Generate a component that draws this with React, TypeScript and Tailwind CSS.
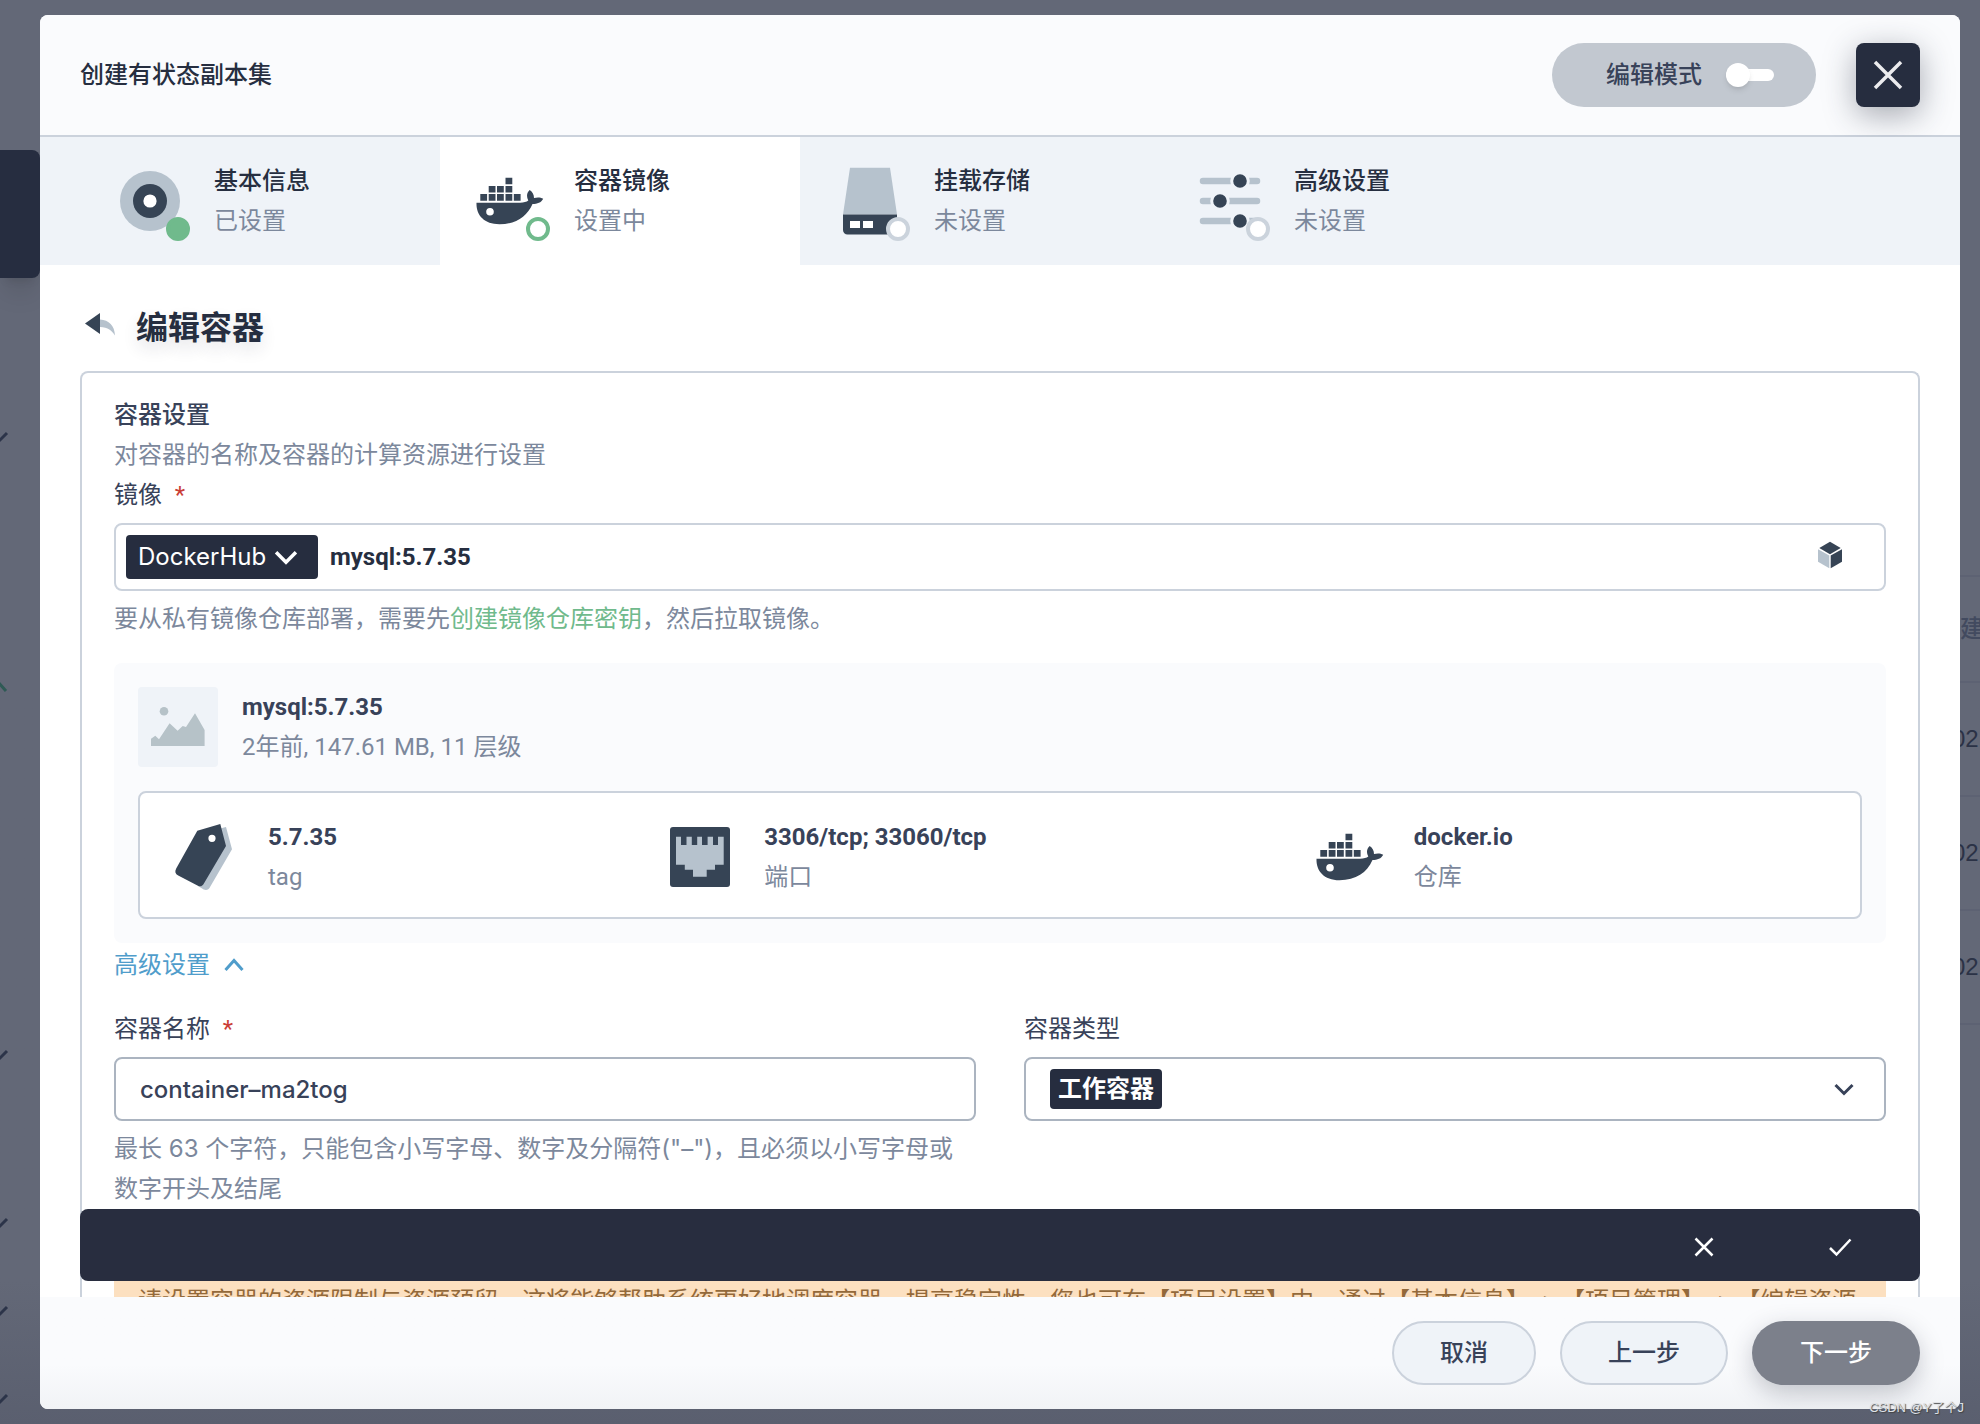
import { ReactNode, useState } from "react";
import clsx from "clsx";

type StepStatus = "done" | "active" | "todo";

interface Step {
  title: string;
  desc: string;
  status: StepStatus;
  icon: ReactNode;
}

function DockerIcon() {
  return (
    <svg viewBox="0 0 80 80" className="size-20 shrink-0" fill="#364455">
      <path d="M10.3 33h6.8v6.7h-6.8zM18.7 33h6.8v6.7h-6.8zM27 33h6.8v6.7H27zM35.5 33h6.8v6.7h-6.8zM43.8 33h6.8v6.7h-6.8zM18.7 25h6.8v6.5h-6.8zM27 25h6.8v6.5H27zM35.5 25h6.8v6.5h-6.8zM35.5 16.7h6.8v6.5h-6.8z" />
      <path
        fillRule="evenodd"
        d="M6.5 41.7H50c4 0 6.500-.8 8.300-2.200C56 35 57 31.500 59.700 29c2.800 2 4.300 4.500 4.300 8 3.500-1 6.500-.8 9.200.8-2 4-5.800 5.200-10.700 5.200C57 55.500 46 63.200 29.500 63.200 14 63.200 6 54 6.500 41.700zM20 47a3.800 3.800 0 1 0 0 7.600 3.800 3.800 0 0 0 0-7.600z"
      />
    </svg>
  );
}

function DiscIcon() {
  return (
    <svg viewBox="0 0 80 80" className="size-20 shrink-0">
      <circle cx="40" cy="40" r="30" fill="#b6c2cd" />
      <circle cx="40" cy="40" r="17" fill="#364455" />
      <circle cx="40" cy="40" r="6.6" fill="#fff" />
    </svg>
  );
}

function StorageIcon() {
  return (
    <svg viewBox="0 0 80 80" className="size-20 shrink-0">
      <path d="M20 6.700h40l7 46.800H13z" fill="#b6c2cd" />
      <path d="M13 53.500h54V69a4.500 4.500 0 0 1-4.500 4.500h-45A4.500 4.500 0 0 1 13 69z" fill="#364455" />
      <path d="M20 60h10v7H20zM33 60h10v7H33z" fill="#fff" />
    </svg>
  );
}

function SlidersIcon() {
  return (
    <svg viewBox="0 0 80 80" className="size-20 shrink-0">
      <g stroke="#b6c2cd" strokeWidth="6.500" strokeLinecap="round">
        <path d="M13 20h54M13 40h54M13 60h54" />
      </g>
      <g fill="#364455" stroke="#eff3f8" strokeWidth="3">
        <circle cx="50" cy="20" r="8.300" />
        <circle cx="30" cy="40" r="8.300" />
        <circle cx="50" cy="60" r="8.300" />
      </g>
    </svg>
  );
}

function TagIcon() {
  return (
    <svg viewBox="0 0 80 80" className="size-20 shrink-0">
      <path d="M56 11.500l6-1.500 6 22.300-21.800 37.400c-1.500 3-3.700 4-6.500 2.800L34 69z" fill="#b6c2cd" />
      <path
        fillRule="evenodd"
        d="M33.300 13.700L56.300 7 62 29 39.900 66.500c-1.500 2.800-3.600 3.500-6 2.200L14.200 58.500c-3-1.600-3.700-4-2-7zM48 17.700a3.600 3.600 0 1 0 0 7.200 3.600 3.600 0 0 0 0-7.200z"
        fill="#364455"
      />
    </svg>
  );
}

function PortIcon() {
  return (
    <svg viewBox="0 0 80 80" className="size-20 shrink-0">
      <rect x="10" y="10" width="60" height="60" rx="3" fill="#364455" />
      <path
        d="M16 19.700h5V28h5.500v-8.300h5.300V28h5.400v-8.300h4.800V28h5.600v-8.300h5.400V28h5v-8.300h5.700v28H55v5h-8.300v7H33v-7h-8.200v-5H16z"
        fill="#b6c2cd"
      />
    </svg>
  );
}

function Chevron({ up, className }: { up?: boolean; className?: string }) {
  return (
    <svg
      viewBox="0 0 24 24"
      className={clsx("shrink-0 pointer-events-none", className)}
      fill="none"
      stroke="currentColor"
    >
      <path d={up ? "M3.500 17L12 7.500l8.500 9.500" : "M3.500 8l8.500 8.500L20.500 8"} />
    </svg>
  );
}

function Required() {
  return (
    <span className="ml-1.5 font-[Roboto,sans-serif] text-[#ca3d35]">*</span>
  );
}

const steps: Step[] = [
  { title: "基本信息", desc: "已设置", status: "done", icon: <DiscIcon /> },
  { title: "容器镜像", desc: "设置中", status: "active", icon: <DockerIcon /> },
  { title: "挂载存储", desc: "未设置", status: "todo", icon: <StorageIcon /> },
  { title: "高级设置", desc: "未设置", status: "todo", icon: <SlidersIcon /> },
];

const imageInfo = [
  { value: "5.7.35", label: "tag", icon: <TagIcon /> },
  { value: "3306/tcp; 33060/tcp", label: "端口", icon: <PortIcon /> },
  { value: "docker.io", label: "仓库", icon: <DockerIcon /> },
];

function StepItem({ step }: { step: Step }) {
  return (
    <li
      className={clsx(
        "flex w-[360px] gap-6 py-6 pl-[30px]",
        step.status === "active" && "bg-white"
      )}
    >
      <div className="relative">
        {step.icon}
        <span
          className={clsx(
            "absolute right-0 bottom-0 size-6 rounded-full border-4",
            step.status === "done" && "border-[#70ba8c] bg-[#70ba8c]",
            step.status === "active" && "border-[#70ba8c] bg-white",
            step.status === "todo" && "border-[#cbd3dc] bg-white"
          )}
        />
      </div>
      <div>
        <p className="font-medium text-[#262e40]">{step.title}</p>
        <p className="text-[#7c889c]">{step.desc}</p>
      </div>
    </li>
  );
}

// dimmed page that stays visible around the dialog
function PageBehind() {
  return (
    <div
      aria-hidden="true"
      className="absolute inset-0 flex justify-between overflow-hidden bg-linear-to-b from-[#636877] from-90% to-[#5a5f6f]"
    >
      <div className="relative w-10">
        <div className="mt-[150px] h-32 w-10 rounded-r-lg bg-[#262d40] shadow-xl" />
        <svg
          className="absolute top-0 left-0 h-full w-10"
          fill="none"
          stroke="#2c3449"
          strokeWidth="3"
        >
          <path d="M-6 434l4 8 9-9M-6 1052l4 8 9-9M-6 1220l4 8 9-9M-6 1308l4 8 9-9M-6 1396l4 8 9-9" />
          <path d="M-10 691l8-9 8 9" stroke="#2f5a55" />
        </svg>
      </div>
      <div className="mt-[575px] w-7 font-['Liberation_Sans','Noto_Sans_CJK_SC',sans-serif] leading-28 text-[#2b3246]">
        <p className="border-t-2 border-[#5d6273] pl-2 leading-26 font-medium text-[#424a5f]">
          建
        </p>
        <p className="border-t-2 border-[#5d6273]">02</p>
        <p className="border-t-2 border-[#5d6273]">02</p>
        <p className="border-y-2 border-[#5d6273]">02</p>
      </div>
    </div>
  );
}

export default function App() {
  const [editMode, setEditMode] = useState(false);
  const [image, setImage] = useState("mysql:5.7.35");
  const [name, setName] = useState("container–ma2tog");

  return (
    <div className="relative h-screen overflow-hidden py-[15px] pr-5 pl-10 font-[Inter,'Noto_Sans_CJK_SC',sans-serif] text-2xl leading-10 text-[#384259]">
      <PageBehind />
      <div
        role="dialog"
        aria-label="创建有状态副本集"
        className="relative flex h-full flex-col overflow-hidden rounded-lg bg-white"
      >
        <header className="flex items-center gap-10 border-b-2 border-[#cbd2dc] bg-[#fafbfd] px-10 py-7">
          <h1 className="flex-1 font-medium text-[#262e40]">创建有状态副本集</h1>
          <label className="flex h-16 items-center gap-6 rounded-full bg-[#c2c8d0] pr-[42px] pl-[54px] font-medium">
            编辑模式
            <input
              type="checkbox"
              className="peer sr-only"
              checked={editMode}
              onChange={(e) => setEditMode(e.target.checked)}
            />
            <span className="flex h-3 w-12 items-center rounded-full bg-white peer-checked:justify-end">
              <span className="size-6 rounded-full bg-white shadow-md" />
            </span>
          </label>
          <button
            aria-label="关闭"
            className="flex size-16 items-center justify-center rounded-lg bg-[#262d3f] shadow-[0_8px_32px_rgba(38,45,63,0.4)]"
          >
            <svg viewBox="0 0 32 32" className="size-8" stroke="#ececee" strokeWidth="3.500">
              <path d="M3 3l26 26M29 3L3 29" />
            </svg>
          </button>
        </header>

        <ol className="flex bg-[#eff3f8] pl-10">
          {steps.map((step) => (
            <StepItem key={step.title} step={step} />
          ))}
        </ol>

        <main className="min-h-0 flex-1 overflow-y-auto px-10 [scrollbar-width:none]">
          <div className="flex items-center gap-4 pt-9 pb-4">
            <button aria-label="返回" className="pl-1">
              <svg viewBox="0 0 36 36" className="size-9">
                <path d="M16 9.500c9 .5 14.500 6 15 16-3-5-7-8-15-8.500z" fill="#b6c2cd" />
                <path d="M1 13.500L16 3v21z" fill="#364455" />
              </svg>
            </button>
            <h2 className="text-[32px] leading-[54px] font-semibold text-[#262e40] [text-shadow:0_8px_16px_rgba(38,45,63,0.12)]">
              编辑容器
            </h2>
          </div>

          <section className="rounded-t-lg border-2 border-b-0 border-[#cbd2dc] px-8 pt-[22px] pb-20">
            <h3 className="font-medium">容器设置</h3>
            <p className="text-[#7c889c]">对容器的名称及容器的计算资源进行设置</p>
            <label htmlFor="image">
              镜像 <Required />
            </label>
            <div className="mt-2 flex h-[68px] items-center gap-3 rounded-lg border-2 border-[#cbd2dc] pr-10 pl-2.5">
              <div className="relative">
                <select
                  aria-label="镜像仓库"
                  className="h-11 w-48 appearance-none rounded bg-[#262d3f] px-3 text-white"
                >
                  <option>DockerHub</option>
                </select>
                <Chevron className="absolute top-2 right-[18px] size-7 stroke-3 text-white" />
              </div>
              <input
                id="image"
                value={image}
                onChange={(e) => setImage(e.target.value)}
                className="min-w-0 flex-1 font-[Roboto,'Noto_Sans_CJK_SC',sans-serif] font-bold text-[#262e40] outline-none"
              />
              <button aria-label="选择镜像" className="pb-1">
                <svg viewBox="0 0 28 28" className="size-7">
                  <path d="M14 .7l10.700 6.300L14 13.200 3.300 7z" fill="#364455" />
                  <path d="M2 8.200l11.300 6.400v12.700L2 20.800z" fill="#b6c2cd" />
                  <path d="M26 8.200l-11.300 6.400v12.700L26 20.800z" fill="#364455" />
                </svg>
              </button>
            </div>
            <p className="mt-2 text-[#7c889c]">
              要从私有镜像仓库部署，需要先
              <a href="#" className="text-[#70ba8c]">
                创建镜像仓库密钥
              </a>
              ，然后拉取镜像。
            </p>

            <div className="mt-6 rounded-lg bg-[#fafbfd] p-6 font-[Roboto,'Noto_Sans_CJK_SC',sans-serif]">
              <div className="flex gap-6">
                <svg viewBox="0 0 80 80" className="size-20 rounded bg-[#eff3f8]" fill="#b6c2c8">
                  <circle cx="26" cy="24.300" r="4.300" />
                  <path d="M13 51.700l4.300-3 3.700 3.600 10.600-16 8 7.400L44.700 39l3.300 1 9-13.700L66.600 43v16H13z" />
                </svg>
                <div>
                  <p className="font-bold">mysql:5.7.35</p>
                  <p className="text-[#7c889c]">2年前, 147.61 MB, 11 层级</p>
                </div>
              </div>
              <div className="mt-6 flex rounded-lg border-2 border-[#cbd2dc] bg-white px-6 pt-6 pb-5">
                {imageInfo.map((item) => (
                  <div key={item.label} className="flex flex-auto gap-6">
                    {item.icon}
                    <div>
                      <p className="font-bold">{item.value}</p>
                      <p className="text-[#7c889c]">{item.label}</p>
                    </div>
                  </div>
                ))}
              </div>
            </div>

            <button className="flex items-center gap-3 pt-0.5 text-[#509dcb]">
              高级设置
              <Chevron up className="size-6 stroke-3" />
            </button>

            <div className="mt-6 grid grid-cols-2 gap-12">
              <div>
                <label htmlFor="name">
                  容器名称 <Required />
                </label>
                <input
                  id="name"
                  value={name}
                  onChange={(e) => setName(e.target.value)}
                  className="mt-2 block h-16 w-full rounded-lg border-2 border-[#abb4c0] px-6 font-medium outline-none"
                />
                <p className="mt-2 text-[#7c889c]">
                  最长 63 个字符，只能包含小写字母、数字及分隔符("–")，且必须以小写字母或数字开头及结尾
                </p>
              </div>
              <div>
                <label htmlFor="type">容器类型</label>
                <div className="mt-2 flex h-16 items-center justify-between rounded-lg border-2 border-[#abb4c0] pr-7 pl-6">
                  <select
                    id="type"
                    className="h-10 w-28 appearance-none rounded bg-[#262d3f] px-2 font-semibold text-white"
                  >
                    <option>工作容器</option>
                  </select>
                  <Chevron className="size-6 stroke-3" />
                </div>
              </div>
            </div>

            <p className="mt-12 overflow-hidden bg-[#fce0c0] px-6 py-6 font-[Roboto,'Noto_Sans_CJK_SC',sans-serif] whitespace-nowrap text-[#93693a]">
              {
                "请设置容器的资源限制与资源预留，这将能够帮助系统更好地调度容器，提高稳定性，您也可在【项目设置】中，通过【基本信息】 -> 【项目管理】 -> 【编辑资源"
              }
            </p>
          </section>

          <div className="sticky bottom-4 flex h-[72px] items-center justify-end gap-28 rounded-lg bg-[#282d3f] pt-1 pr-[68px]">
            <button aria-label="取消编辑">
              <svg viewBox="0 0 24 24" className="size-6" stroke="#fff" strokeWidth="2.500">
                <path d="M3.500 3.500l17 17M20.500 3.500l-17 17" />
              </svg>
            </button>
            <button aria-label="确认编辑">
              <svg
                viewBox="0 0 24 24"
                className="size-6"
                fill="none"
                stroke="#fff"
                strokeWidth="2.500"
              >
                <path d="M2 13l6.500 6.500L22.500 4.500" />
              </svg>
            </button>
          </div>
        </main>

        <footer className="flex justify-end gap-6 bg-linear-to-b from-[#fafbfd] from-60% to-[#f1f3f6] px-10 py-6 font-medium">
          <button className="h-16 rounded-full border-2 border-[#cbd2dc] bg-[#eff3f8] px-[46px]">
            取消
          </button>
          <button className="h-16 rounded-full border-2 border-[#cbd2dc] bg-[#eff3f8] px-[46px]">
            上一步
          </button>
          <button className="h-16 rounded-full bg-[#7c808b] px-12 text-white shadow-[0_8px_24px_rgba(38,45,63,0.25)]">
            下一步
          </button>
        </footer>
      </div>
      <p className="absolute right-4 bottom-1 font-['Liberation_Sans','Noto_Sans_CJK_SC',sans-serif] text-[13px] leading-6 text-[#dfe1e5] [text-shadow:1px_1px_1px_#444]">
        CSDN @Y了个J
      </p>
    </div>
  );
}
